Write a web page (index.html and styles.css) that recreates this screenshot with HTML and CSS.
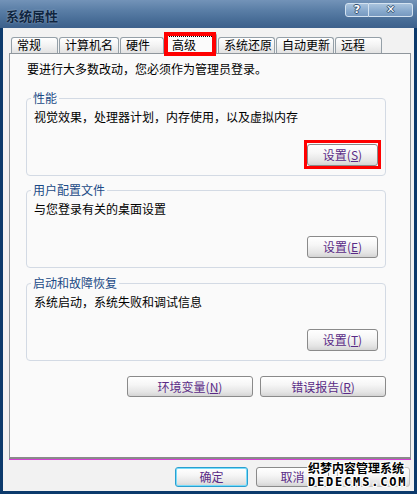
FILE: index.html
```html
<!DOCTYPE html>
<html lang="zh-CN">
<head>
<meta charset="utf-8">
<title>系统属性</title>
<link rel="stylesheet" href="styles.css">
</head>
<body>
<div class="window">
  <div class="titlebar">
    <span class="title">系统属性</span>
    <div class="caption-btns">
      <span class="cbtn help">?</span>
      <span class="cbtn close">✕</span>
    </div>
  </div>
  <div class="client">
    <div class="tabs">
      <div class="tab w47">常规</div>
      <div class="tab w60">计算机名</div>
      <div class="tab w44">硬件</div>
      <div class="tab selected"><span class="focus">高级</span></div>
      <div class="tab w57">系统还原</div>
      <div class="tab w58">自动更新</div>
      <div class="tab w47">远程</div>
    </div>
    <div class="panel">
      <p class="intro">要进行大多数改动，您必须作为管理员登录。</p>
      <fieldset class="group first">
        <legend>性能</legend>
        <p>视觉效果，处理器计划，内存使用，以及虚拟内存</p>
        <div class="group-actions"><button class="btn marked">设置(<u>S</u>)</button></div>
      </fieldset>
      <fieldset class="group second">
        <legend>用户配置文件</legend>
        <p>与您登录有关的桌面设置</p>
        <div class="group-actions"><button class="btn">设置(<u>E</u>)</button></div>
      </fieldset>
      <fieldset class="group third">
        <legend>启动和故障恢复</legend>
        <p>系统启动，系统失败和调试信息</p>
        <div class="group-actions"><button class="btn">设置(<u>T</u>)</button></div>
      </fieldset>
      <div class="panel-actions">
        <button class="btn wide">环境变量(<u>N</u>)</button>
        <button class="btn wide">错误报告(<u>R</u>)</button>
      </div>
    </div>
    <div class="footer">
      <button class="btn foot default">确定</button>
      <button class="btn foot">取消</button>
      <button class="btn foot disabled" aria-label="应用"></button>
    </div>
  </div>
  <div class="watermark">
    <div class="wm1">织梦内容管理系统</div>
    <div class="wm2">DEDECMS.COM</div>
  </div>
</div>
</body>
</html>
```
FILE: styles.css
```css
* { box-sizing: border-box; }
html, body { margin: 0; padding: 0; }
body {
  width: 417px;
  height: 494px;
  overflow: hidden;
  font-family: "Noto Sans CJK SC", "Liberation Sans", sans-serif;
  font-size: 12px;
  line-height: 14px;
  color: #000;
  background: #f2f2f2;
}
.window {
  position: relative;
  width: 417px;
  height: 494px;
  display: flex;
  flex-direction: column;
}
.titlebar {
  height: 28px;
  flex: none;
  display: flex;
  justify-content: space-between;
  align-items: flex-start;
  padding-left: 6px;
  background: linear-gradient(180deg, #7393b8 0%, #5b7fa7 35%, #466b95 75%, #3c608b 100%);
}
.title {
  margin-top: 8px;
  font-weight: bold;
  font-size: 13px;
  line-height: 15px;
  color: #0f2540;
  text-shadow: 0 0 2px rgba(255,255,255,0.45);
}
.caption-btns {
  display: flex;
  margin: 3px 4px 0 0;
}
.cbtn {
  height: 14px;
  display: flex;
  align-items: center;
  justify-content: center;
  border: 1px solid #d3e2f0;
  background: linear-gradient(180deg, #a9c3dd 0%, #86a8cc 60%, #7799c0 100%);
  color: #fff;
  font-family: "DejaVu Sans", sans-serif;
  font-weight: bold;
  font-size: 11px;
  line-height: 12px;
  text-shadow: 1px 0 #34506f, -1px 0 #34506f, 0 1px #34506f, 0 -1px #34506f;
}
.help { width: 24px; border-radius: 3px 0 0 3px; }
.close { width: 44px; border-left: none; border-radius: 0 3px 3px 0; }

.client {
  flex: 1;
  display: flex;
  flex-direction: column;
  border: 3px solid #0c3a6c;
  border-top: none;
  padding: 5px 3px 0 6px;
  background: #f2f2f2;
}
.tabs {
  display: flex;
  align-items: flex-end;
  height: 21px;
  margin: 0 0 -1px 2px;
  position: relative;
  z-index: 1;
}
.tab {
  height: 16px;
  margin: 0 1px 1px 0;
  border: 1px solid #95a0a8;
  border-bottom: none;
  border-radius: 3px 3px 0 0;
  background: linear-gradient(180deg, #ffffff 0%, #f4f4f4 45%, #e2e2e2 100%);
  padding: 0 0 0 5px;
  line-height: 14px;
  white-space: nowrap;
}
.w44 { width: 44px; }
.w47 { width: 47px; }
.w57 { width: 57px; }
.w58 { width: 58px; }
.w60 { width: 60px; }
.tab.selected {
  position: relative;
  width: 52px;
  height: 21px;
  margin-bottom: 0;
  padding: 1px 0 0 1px;
  background: #fbfbfb;
}
.tab.selected::after {
  content: "";
  position: absolute;
  left: -2px;
  top: -2px;
  right: 0;
  bottom: -2px;
  border: 4px solid #ff0000;
}
.focus {
  display: inline-block;
  height: 17px;
  margin-top: 1px;
  padding: 1px 17px 0 4px;
  border: 1px dotted #000;
  line-height: 14px;
}
.panel {
  height: 406px;
  flex: none;
  border: 1px solid #8f969c;
  border-bottom: 2px solid #8a8a8a;
  box-shadow: 0 1px 0 #d43fd4;
  background: #fafafa;
  padding: 8px 24px 0 16px;
}
.intro { margin: 0 0 0 1px; }
.group {
  margin: 15px 0 0;
  padding: 5px 7px 9px 7px;
  border: 1px solid #d3dae4;
  border-radius: 4px;
  min-width: 0;
}
.group.second { margin-top: 7px; }
.group.third { margin-top: 8px; }
.group legend {
  padding: 0 2px;
  margin-left: -3px;
  color: #1b4a86;
  line-height: 14px;
}
.group p { margin: 0; }
.group-actions {
  display: flex;
  justify-content: flex-end;
  margin-top: 20px;
}
.btn {
  position: relative;
  width: 71px;
  height: 22px;
  padding: 0;
  font: inherit;
  line-height: 14px;
  color: #5a2b86;
  border: 1px solid #8a8a8a;
  border-radius: 3px;
  background: linear-gradient(180deg, #ffffff 0%, #f6f6f6 40%, #e4e4e4 80%, #d4d4d4 100%);
}
.btn u { text-decoration: underline; }
.btn.marked::after {
  content: "";
  position: absolute;
  left: -4px;
  top: -5px;
  right: -4px;
  bottom: -4px;
  border: 3px solid #ff0000;
}
.panel-actions {
  display: flex;
  justify-content: flex-end;
  gap: 7px;
  margin-top: 15px;
}
.btn.wide { width: 126px; height: 21px; }
.footer {
  display: flex;
  justify-content: flex-end;
  gap: 8px;
  margin-top: 8px;
  padding-right: 1px;
}
.btn.foot { width: 73px; height: 20px; }
.btn.default {
  border-color: #2a9fd0;
  box-shadow: inset 0 0 0 1px #78dcfa;
}
.btn.disabled { border-color: #c4c4c4; }
.watermark {
  position: absolute;
  left: 308px;
  top: 460px;
  color: #000;
  text-shadow: 1px 0 #fff, -1px 0 #fff, 0 1px #fff, 0 -1px #fff, 1px 1px #fff, -1px -1px #fff, 1px -1px #fff, -1px 1px #fff;
}
.wm1 {
  font-weight: bold;
  font-size: 12px;
  line-height: 16px;
}
.wm2 {
  font-family: "DejaVu Sans Mono", monospace;
  font-weight: bold;
  font-size: 12px;
  line-height: 12px;
  letter-spacing: 1.8px;
}
```
